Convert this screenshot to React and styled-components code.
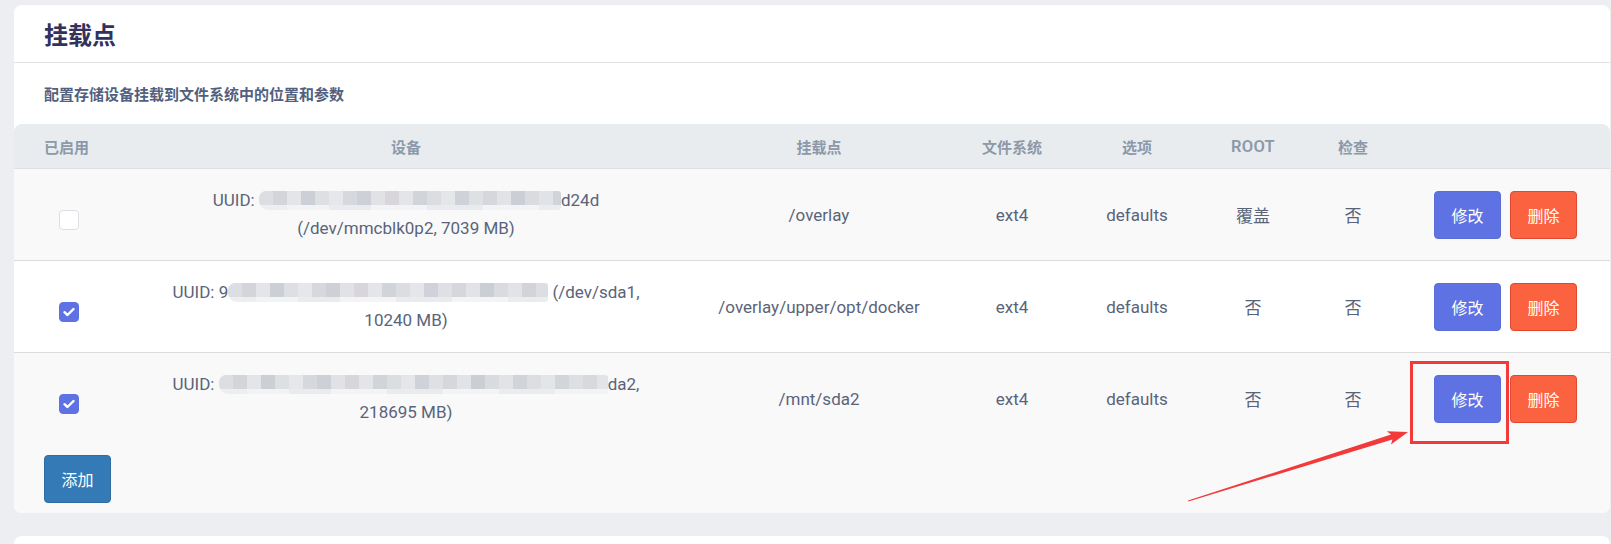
import React from 'react';
import styled, { createGlobalStyle } from 'styled-components';

const GlobalStyle = createGlobalStyle`
  html, body {
    margin: 0;
    padding: 0;
    background: #eceef1;
    font-family: Roboto, "Noto Sans CJK SC", sans-serif;
  }
`;

const COLS = '116px 552px 274px 112px 138px 94px 106px 1fr';

const Page = styled.div`
  position: relative;
  width: 1611px;
  height: 544px;
  overflow: hidden;
  padding: 5px 1px 0 14px;
  box-sizing: border-box;
`;

const Card = styled.section`
  background: #fff;
  border-radius: 8px;
  overflow: hidden;
`;

const CardTitle = styled.h3`
  margin: 0;
  height: 57px;
  display: flex;
  align-items: center;
  padding: 0 30px;
  font-size: 24px;
  font-weight: 700;
  color: #32325d;
  border-bottom: 1px solid #e2e3e6;
`;

const Description = styled.div`
  height: 61px;
  display: flex;
  align-items: center;
  padding: 0 30px;
  font-size: 15px;
  font-weight: 700;
  color: #525f7f;
`;

const HeaderRow = styled.div`
  display: grid;
  grid-template-columns: ${COLS};
  height: 44px;
  background: #e9ecef;
  border-bottom: 1px solid #dcdfe3;
  border-radius: 8px 8px 0 0;
`;

const HeaderCell = styled.div`
  display: flex;
  align-items: center;
  justify-content: ${(p) => (p.$left ? 'flex-start' : 'center')};
  padding-left: ${(p) => (p.$left ? '30px' : '0')};
  font-size: 15px;
  font-weight: 600;
  color: #8c99a9;
`;

const Latin = styled.span`
  font-size: 16.5px;
  letter-spacing: 0.3px;
`;

const Row = styled.div`
  display: grid;
  grid-template-columns: ${COLS};
  height: 91px;
  background: ${(p) => (p.$striped ? '#f9f9f9' : '#fff')};
  border-bottom: ${(p) => (p.$last ? 'none' : '1px solid #dcdcdc')};
`;

const Cell = styled.div`
  display: flex;
  align-items: center;
  justify-content: center;
  text-align: center;
  font-size: 17px;
  color: #5a6479;
`;

const CheckCell = styled(Cell)`
  justify-content: flex-start;
  padding-left: 45px;
`;

const DeviceCell = styled(Cell)`
  padding: 0 36px;
  line-height: 27.5px;
`;

const ActionCell = styled(Cell)`
  justify-content: flex-start;
  padding-left: 28px;
  gap: 9px;
`;

const Checkbox = styled.span`
  width: 20px;
  height: 20px;
  margin-top: 10px;
  box-sizing: border-box;
  border-radius: 4px;
  display: flex;
  align-items: center;
  justify-content: center;
  background: ${(p) => (p.$checked ? '#5e72e4' : '#fff')};
  border: 1px solid ${(p) => (p.$checked ? '#5e72e4' : '#dcdfe4')};
`;

const Mosaic = styled.span`
  display: inline-block;
  vertical-align: -4px;
  width: ${(p) => p.$w}px;
  height: 19px;
  border-radius: 7px 3px 3px 9px;
  filter: blur(0.6px);
  background-image:
    linear-gradient(to right, #dcdee2 0 14px, #d3d5db 14px 28px, #e3e5e8 28px 42px, #ccd0d6 42px 56px,
      #dddfe3 56px 70px, #e6e7ea 70px 84px, #d6d8dd 84px 98px, #cdd0d6 98px 112px, #e1e2e6 112px 126px,
      #d8d6da 126px 140px, #e4e5e8 140px 154px, #d1d4d9 154px 168px, #dbdde1 168px 182px, #e5e6e9 182px 196px,
      #cfd2d8 196px 210px, #dee0e4 210px 224px, #d5d7dc 224px 238px, #e2e3e7 238px 252px, #cbced4 252px 266px,
      #d9dbdf 266px 280px, #e1e3e6 280px 294px, #d1d4d9 294px 308px, #dcdee2 308px 322px, #e4e5e8 322px 336px,
      #d2d5da 336px 350px, #dddfe3 350px 364px, #d7d9de 364px 378px, #e2e4e7 378px 392px),
    linear-gradient(to right, #eceef0 0 28px, #f2f3f5 28px 70px, #e9ebee 70px 112px, #f4f4f6 112px 168px,
      #eaebee 168px 224px, #f3f4f5 224px 280px, #ebecef 280px 336px, #f2f3f4 336px 392px);
  background-size: 100% 14px, 100% 5px;
  background-position: 0 0, 0 14px;
  background-repeat: no-repeat;
`;

const Button = styled.button`
  width: 67px;
  height: 48px;
  border-radius: 4px;
  font-family: Roboto, "Noto Sans CJK SC", sans-serif;
  font-size: 16px;
  color: #fff;
  cursor: pointer;
  padding: 0;
  background: ${(p) => p.$bg};
  border: 1px solid ${(p) => p.$border};
`;

const Footer = styled.div`
  background: #f9f9f9;
  padding: 11px 30px 10px;
`;

const NextCard = styled.div`
  margin-top: 23px;
  height: 40px;
  background: #fff;
  border-radius: 8px 8px 0 0;
`;

const Overlay = styled.svg`
  position: absolute;
  left: 0;
  top: 0;
  pointer-events: none;
`;

const mounts = [
  {
    enabled: false,
    device: <>UUID: <Mosaic $w={302} />d24d (/dev/mmcblk0p2, 7039 MB)</>,
    target: '/overlay',
    root: '覆盖',
  },
  {
    enabled: true,
    device: <>UUID: 9<Mosaic $w={320} /> (/dev/sda1, 10240 MB)</>,
    target: '/overlay/upper/opt/docker',
    root: '否',
  },
  {
    enabled: true,
    device: <>UUID: <Mosaic $w={389} />da2, 218695 MB)</>,
    target: '/mnt/sda2',
    root: '否',
  },
];

const headers = ['设备', '挂载点', '文件系统', '选项', <Latin>ROOT</Latin>, '检查', ''];

function CheckMark() {
  return (
    <svg width="12" height="10" viewBox="0 0 12 10">
      <path d="M1.5 5.2 L4.5 8 L10.5 2" fill="none" stroke="#fff" strokeWidth="2.4" strokeLinecap="round" strokeLinejoin="round" />
    </svg>
  );
}

export default function App() {
  return (
    <>
      <GlobalStyle />
      <Page>
        <Card>
          <CardTitle>挂载点</CardTitle>
          <Description>配置存储设备挂载到文件系统中的位置和参数</Description>
          <HeaderRow>
            <HeaderCell $left>已启用</HeaderCell>
            {headers.map((h, i) => (
              <HeaderCell key={i}>{h}</HeaderCell>
            ))}
          </HeaderRow>
          {mounts.map((m, i) => (
            <Row key={i} $striped={i % 2 === 0} $last={i === mounts.length - 1}>
              <CheckCell>
                <Checkbox $checked={m.enabled}>{m.enabled && <CheckMark />}</Checkbox>
              </CheckCell>
              <DeviceCell>
                <span>{m.device}</span>
              </DeviceCell>
              <Cell>{m.target}</Cell>
              <Cell>ext4</Cell>
              <Cell>defaults</Cell>
              <Cell>{m.root}</Cell>
              <Cell>否</Cell>
              <ActionCell>
                <Button $bg="#5e72e4" $border="#5a6ed9">修改</Button>
                <Button $bg="#fb6340" $border="#e2472f">删除</Button>
              </ActionCell>
            </Row>
          ))}
          <Footer>
            <Button $bg="#337ab7" $border="#2e6da4">添加</Button>
          </Footer>
        </Card>
        <NextCard />
        <Overlay width="1611" height="544" viewBox="0 0 1611 544">
          <rect x="1411.5" y="362.5" width="96" height="80" fill="none" stroke="#f23a3a" strokeWidth="3" />
          <polygon
            points="1188,500.6 1391,434.6 1386.8,431.2 1408,432 1391,444.6 1392.4,439.4 1188.4,501.6"
            fill="#f23a3a"
          />
        </Overlay>
      </Page>
    </>
  );
}
